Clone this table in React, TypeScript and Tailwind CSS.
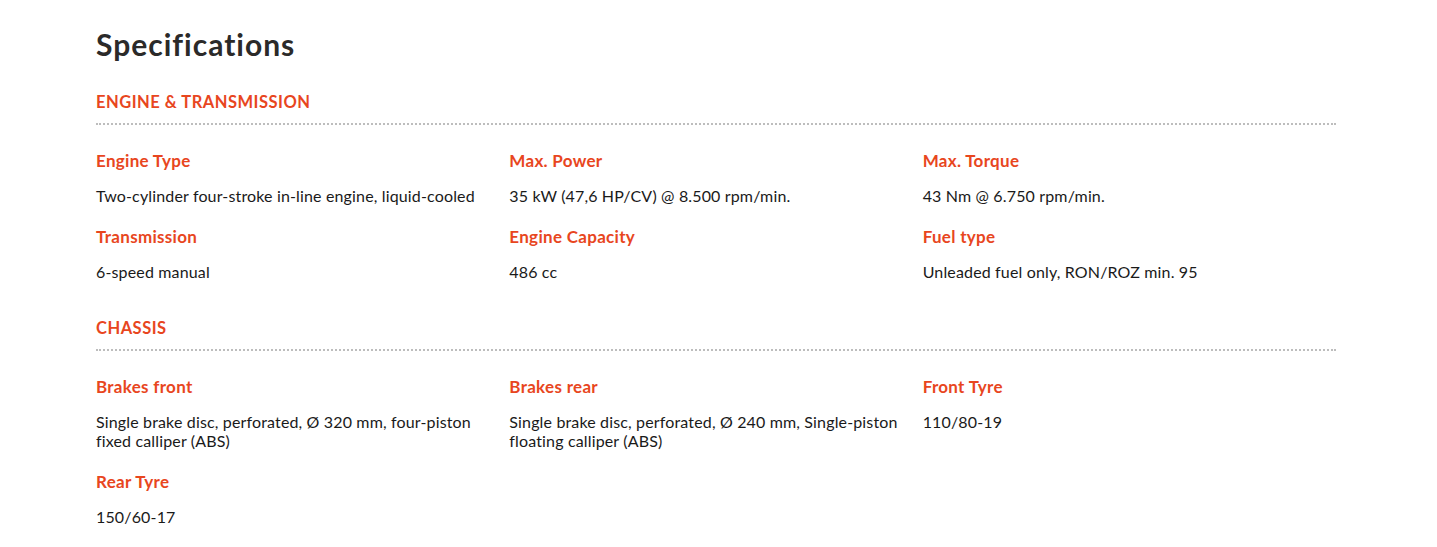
import React from "react";

type Item = { label: string; value: string[] };

const sections: { title: string; items: Item[] }[] = [
  {
    title: "ENGINE & TRANSMISSION",
    items: [
      { label: "Engine Type", value: ["Two-cylinder four-stroke in-line engine, liquid-cooled"] },
      { label: "Max. Power", value: ["35 kW (47,6 HP/CV) @ 8.500 rpm/min."] },
      { label: "Max. Torque", value: ["43 Nm @ 6.750 rpm/min."] },
      { label: "Transmission", value: ["6-speed manual"] },
      { label: "Engine Capacity", value: ["486 cc"] },
      { label: "Fuel type", value: ["Unleaded fuel only, RON/ROZ min. 95"] },
    ],
  },
  {
    title: "CHASSIS",
    items: [
      { label: "Brakes front", value: ["Single brake disc, perforated, Ø 320 mm, four-piston", "fixed calliper (ABS)"] },
      { label: "Brakes rear", value: ["Single brake disc, perforated, Ø 240 mm, Single-piston", "floating calliper (ABS)"] },
      { label: "Front Tyre", value: ["110/80-19"] },
      { label: "Rear Tyre", value: ["150/60-17"] },
    ],
  },
];

export default function App() {
  return (
    <div
      className="w-[1437px] h-[547px] bg-white overflow-hidden"
      style={{ fontFamily: "Lato, 'Open Sans', sans-serif" }}
    >
      <div className="w-[1240px] ml-[96px] pt-[26px]">
        <h1 className="text-[30px] leading-[36px] font-bold tracking-[1px] text-[#2b2a29]">Specifications</h1>
        <div className="flex flex-col gap-[35px] mt-[28px]">
          {sections.map((s) => (
            <div key={s.title}>
              <div className="text-[16.5px] leading-[24px] font-bold tracking-[0.5px] text-[#e8461e]">{s.title}</div>
              <div className="mt-[9px] border-t-2 border-dotted border-[#bdbdbd]" />
              <div className="grid grid-cols-3 gap-y-[20px] mt-[24px]">
                {s.items.map((it) => (
                  <div key={it.label}>
                    <div className="text-[17px] leading-[24px] font-bold tracking-[0.3px] text-[#e8461e]">{it.label}</div>
                    <div className="mt-[13px] text-[16px] leading-[19px] tracking-[0.15px] text-[#1a1a1a]">
                      {it.value.map((v) => (
                        <div key={v}>{v}</div>
                      ))}
                    </div>
                  </div>
                ))}
              </div>
            </div>
          ))}
        </div>
      </div>
    </div>
  );
}
